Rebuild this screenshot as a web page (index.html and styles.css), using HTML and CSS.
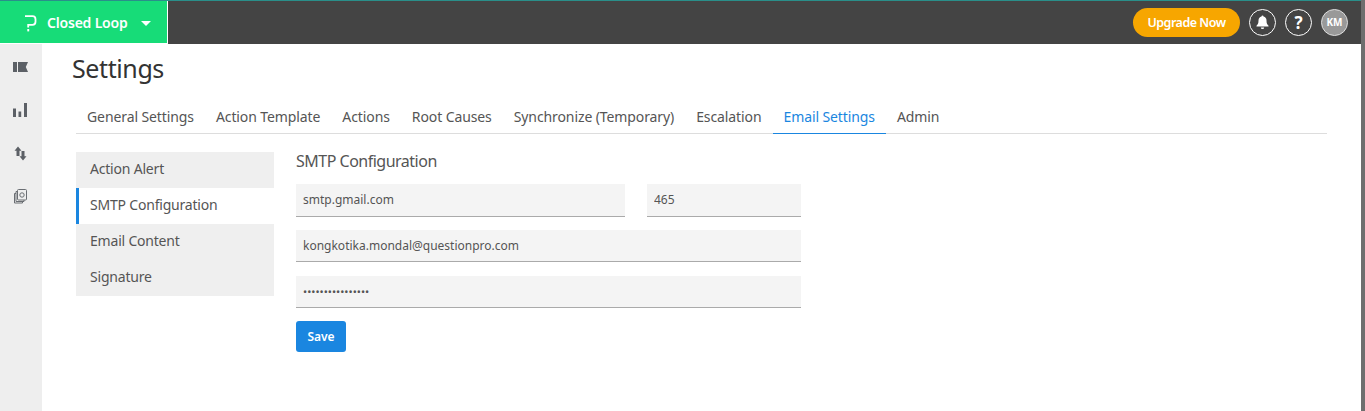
FILE: index.html
```html
<!DOCTYPE html>
<html lang="en">
<head>
<meta charset="utf-8">
<title>Settings</title>
<link rel="stylesheet" href="styles.css">
</head>
<body>
<div class="page">
<header class="topbar">
  <div class="brand">
    <svg class="brand-logo" width="13" height="17" viewBox="0 0 13 17"><path d="M1 1.200h7.500a3 3 0 0 1 3 3v2.600a3 3 0 0 1-3 3H4.200v2.600" fill="none" stroke="#fff" stroke-width="1.800"/><rect x="3.300" y="14" width="1.900" height="2.400" fill="#fff"/></svg>
    <span class="brand-name">Closed Loop</span>
    <span class="brand-caret"></span>
  </div>
  <div class="topbar-right">
    <button class="upgrade">Upgrade Now</button>
    <span class="circle"><svg width="13" height="14" viewBox="0 0 13 14"><path d="M6.500 0.500a1 1 0 0 1 1 1c2 .5 3 2 3 4 0 3 .7 4 2 5.200v.8H.500v-.8c1.300-1.200 2-2.200 2-5.200 0-2 1-3.500 3-4a1 1 0 0 1 1-1zM4.800 12.500h3.400a1.700 1.500 0 0 1-3.400 0z" fill="#fff"/></svg></span>
    <span class="circle circle-help">?</span>
    <span class="circle circle-user">KM</span>
  </div>
</header>
<div class="shell">
  <nav class="rail">
    <svg width="16" height="12" viewBox="0 0 16 12"><path d="M1 1h4v10H1zM6 1h10l-2.200 5 2.200 5H6z" fill="#5c6066"/></svg>
    <svg width="16" height="17" viewBox="0 0 16 17"><path d="M1 7.500h3V16H1zM6.500 10.500h2.700V16H6.500zM12 2h3v14h-3z" fill="#5c6066"/></svg>
    <svg width="14" height="15" viewBox="0 0 14 15"><path d="M5 .5l3.500 4.300H6.500V10H3.500V4.800H1.500zM10 14.500l-3.500-4.300h2V5h3v5.200h2z" fill="#5c6066"/></svg>
    <svg width="16" height="16" viewBox="0 0 16 16"><g fill="none" stroke="#6a6e73"><rect x="5.500" y="0.500" width="9" height="10.500" rx="1"/><path d="M5.500 2.500H4v10h8V11M4 4.500H2.500v9.500H10.500V12.500"/><circle cx="10" cy="6" r="2.200"/></g></svg>
  </nav>
  <main class="content">
    <h1 class="title">Settings</h1>
    <ul class="tabs">
      <li class="tab">General Settings</li>
      <li class="tab">Action Template</li>
      <li class="tab">Actions</li>
      <li class="tab">Root Causes</li>
      <li class="tab">Synchronize (Temporary)</li>
      <li class="tab">Escalation</li>
      <li class="tab tab-active">Email Settings</li>
      <li class="tab">Admin</li>
    </ul>
    <div class="panel">
      <ul class="side">
        <li class="side-item">Action Alert</li>
        <li class="side-item side-active">SMTP Configuration</li>
        <li class="side-item">Email Content</li>
        <li class="side-item">Signature</li>
      </ul>
      <form class="form">
        <h2 class="form-title">SMTP Configuration</h2>
        <div class="row">
          <input class="field field-host" type="text" value="smtp.gmail.com">
          <input class="field field-host field-port" type="text" value="465">
        </div>
        <input class="field field-wide" type="text" value="kongkotika.mondal@questionpro.com">
        <input class="field field-wide field-pass" type="password" value="aaaaaaaaaaaaaaaa">
        <button class="save" type="button">Save</button>
      </form>
    </div>
  </main>
</div>
</div>
<div class="edge"></div>
</body>
</html>
```
FILE: styles.css
```css
* { box-sizing: border-box; }
html, body { margin: 0; padding: 0; height: 100%; overflow: hidden; background: #fff; }
body { display: flex; font-family: "Noto Sans", "Open Sans", sans-serif; color: #555; }
ul { list-style: none; margin: 0; padding: 0; }
.page { flex: 1; min-width: 0; }
.edge { width: 4px; height: 100%; background: #6e6e6e; }

.topbar { height: 44px; background: #444; border-top: 1px solid #2a8f8a; display: flex; justify-content: space-between; align-items: stretch; }
.brand { width: 168px; background: #17dc78; border-right: 1px solid #fff; border-bottom: 1px solid #fff; display: flex; align-items: center; padding-left: 24px; color: #fff; }
.brand-logo { flex: none; margin-top: 2px; }
.brand-name { margin-left: 10px; font-size: 14px; font-weight: 600; letter-spacing: -0.2px; }
.brand-caret { margin-left: 13px; width: 0; height: 0; border-left: 5px solid transparent; border-right: 5px solid transparent; border-top: 5.500px solid #fff; margin-top: 3px; }
.topbar-right { display: flex; align-items: center; gap: 9px; padding-right: 13px; padding-bottom: 1px; }
.upgrade { width: 107px; height: 29px; border: 0; border-radius: 15px; background: #f7a600; color: #fff; font: 600 12.500px "Noto Sans", sans-serif; letter-spacing: -0.5px; padding: 0; }
.circle { width: 27px; height: 27px; border: 1px solid #fff; border-radius: 50%; display: flex; align-items: center; justify-content: center; color: #fff; }
.circle-help { font-size: 17px; font-weight: 700; }
.circle-user { background: #999; font-size: 10px; font-weight: 700; border-color: #ddd; }

.shell { display: flex; height: 367px; }
.rail { width: 42px; background: #eee; display: flex; flex-direction: column; align-items: center; padding-top: 17px; gap: 28px; padding-right: 2px; }
.content { flex: 1; padding-left: 30px; padding-right: 34px; }
.title { margin: 5px 0 0; height: 38px; font-size: 25px; letter-spacing: -0.4px; line-height: 38px; font-weight: 400; color: #333; }
.tabs { display: flex; margin: 16px 0 0 4px; border-bottom: 1px solid #ddd; height: 31px; }
.tab { padding: 0 11px; font-size: 14px; letter-spacing: -0.1px; line-height: 27px; color: #555; white-space: nowrap; }
.tab-active { color: #1a86e0; border-bottom: 1px solid #1a86e0; height: 31px; }
.panel { display: flex; align-items: flex-start; margin: 18px 0 0 4px; }
.side { width: 198px; background: #efefef; }
.side-item { height: 36px; padding-left: 14px; font-size: 14px; letter-spacing: -0.2px; line-height: 34px; color: #555; }
.side-active { background: #fff; border-left: 3px solid #1a86e0; padding-left: 11px; }
.form { width: 505px; margin-left: 22px; display: flex; flex-direction: column; align-items: flex-start; }
.form-title { margin: 0 0 14px; font-size: 16px; letter-spacing: -0.5px; line-height: 18px; font-weight: 400; color: #555; }
.row { display: flex; justify-content: space-between; width: 100%; }
.field { height: 32px; border: 0; border-bottom: 1px solid #aaa; background: #f4f4f4; padding: 0 7px; font: 12px "Noto Sans", sans-serif; color: #555; outline: none; margin-bottom: 14px; }
.field-host { width: 329px; height: 33px; padding-bottom: 2px; margin-bottom: 13px; }
.field-port { width: 154px; }
.field-wide { width: 100%; }
.field-pass { font-size: 11px; }
.save { width: 50px; height: 31px; border: 0; border-radius: 3px; background: #1a86e0; color: #fff; font: 600 12px "Noto Sans", sans-serif; padding: 0; margin-top: -1px; }
```
